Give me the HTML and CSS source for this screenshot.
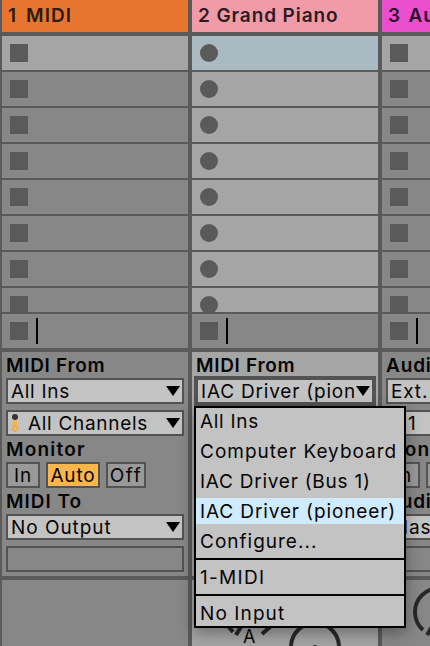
FILE: index.html
```
<!DOCTYPE html>
<html lang="en">
<head>
<meta charset="utf-8">
<title>Session View</title>
<link rel="stylesheet" href="styles.css">
</head>
<body>
<main class="session">
  <section class="track">
    <h2 class="title orange"><span class="t-midi">1 MIDI</span></h2>
    <div class="clips">
      <div class="slot lit"><i class="stop"></i></div><div class="slot"><i class="stop"></i></div><div class="slot"><i class="stop"></i></div><div class="slot"><i class="stop"></i></div><div class="slot"><i class="stop"></i></div><div class="slot"><i class="stop"></i></div><div class="slot"><i class="stop"></i></div><div class="slot"><i class="stop"></i></div>
    </div>
    <div class="status"><i class="stop"></i><i class="caret"></i></div>
    <div class="io">
      <h3 class="t-from">MIDI From</h3>
      <div class="select"><span class="t-allins">All Ins</span><i class="arrow"></i></div>
      <div class="select second"><svg class="channel" width="8" height="20"><circle cx="4" cy="4" r="3" fill="#333"/><circle cx="4" cy="10" r="3" fill="#f9b64d"/><circle cx="4" cy="15.500" r="2.700" fill="#f9b64d" stroke="#c88e38" stroke-width=".7" stroke-dasharray="2 1"/></svg><span class="t-channels">All Channels</span><i class="arrow"></i></div>
      <h3 class="t-monitor">Monitor</h3>
      <div class="buttons"><b class="in"><span>In</span></b><b class="auto"><span>Auto</span></b><b class="off"><span>Off</span></b></div>
      <h3 class="t-to">MIDI To</h3>
      <div class="select"><span class="t-output">No Output</span><i class="arrow"></i></div>
      <div class="blank"></div>
    </div>
    <div class="mixer"></div>
  </section>

  <section class="track selected">
    <h2 class="title pink"><span class="t-piano">2 Grand Piano</span></h2>
    <div class="clips">
      <div class="slot blue"><i class="record"></i></div><div class="slot"><i class="record"></i></div><div class="slot"><i class="record"></i></div><div class="slot"><i class="record"></i></div><div class="slot"><i class="record"></i></div><div class="slot"><i class="record"></i></div><div class="slot"><i class="record"></i></div><div class="slot"><i class="record"></i></div>
    </div>
    <div class="status"><i class="stop"></i><i class="caret"></i></div>
    <div class="io">
      <h3 class="t-from">MIDI From</h3>
      <div class="select focused"><span class="t-pion">IAC Driver (pion</span><i class="arrow"></i></div>
      <div class="menu">
        <div><span class="t-allins">All Ins</span></div>
        <div><span class="t-keyboard">Computer Keyboard</span></div>
        <div><span class="t-bus">IAC Driver (Bus 1)</span></div>
        <div class="active"><span class="t-pioneer">IAC Driver (pioneer)</span></div>
        <div><span class="t-config">Configure...</span></div>
        <hr>
        <div><span class="t-one">1-MIDI</span></div>
        <hr>
        <div><span class="t-input">No Input</span></div>
      </div>
    </div>
    <div class="mixer"><svg width="186" height="66"><g fill="none" stroke="#282828" stroke-width="4"><path d="M36 46l5 6M44 55l6-10M70 54l8-7"/><circle cx="123" cy="67" r="24"/><path d="M123 65v10" stroke-width="3"/></g></svg><span class="send">A</span></div>
  </section>

  <section class="track third">
    <h2 class="title magenta"><span class="t-audio">3 Au</span></h2>
    <div class="clips">
      <div class="slot lit"><i class="stop"></i></div><div class="slot"><i class="stop"></i></div><div class="slot"><i class="stop"></i></div><div class="slot"><i class="stop"></i></div><div class="slot"><i class="stop"></i></div><div class="slot"><i class="stop"></i></div><div class="slot"><i class="stop"></i></div><div class="slot"><i class="stop"></i></div>
    </div>
    <div class="status"><i class="stop"></i><i class="caret"></i></div>
    <div class="io">
      <h3 class="t-audiofrom">Audi</h3>
      <div class="select"><span class="t-ext">Ext.</span></div>
      <div class="select second"><span class="t-channel1">1</span></div>
      <h3 class="t-monitor">Mon</h3>
      <div class="buttons"><b class="in"><span>In</span></b><b class="auto plain"></b></div>
      <h3 class="t-audiofrom">Audi</h3>
      <div class="select"><span class="t-master">Mas</span></div>
      <div class="blank"></div>
    </div>
    <div class="mixer"><svg width="186" height="66"><g fill="none" stroke="#282828" stroke-width="4"><path d="M41 50A24 24 0 1 1 73 50M45 55l12-20"/></g></svg></div>
  </section>
</main>
</body>
</html>
```

FILE: styles.css
```
* { box-sizing: border-box; }
body { margin: 0; width: 430px; height: 646px; overflow: hidden; background: #5a5a5a; color: #050505; font: 19px/26px Inter, "Liberation Sans", sans-serif; letter-spacing: .85px; }
.session { display: flex; gap: 4px; padding-left: 2px; width: 430px; height: 646px; overflow: hidden; }
.track { width: 186px; flex: none; display: flex; flex-direction: column; }
.title, h3 { margin: 0; font-size: 19px; font-weight: 600; white-space: nowrap; }
.title { height: 32px; line-height: 31px; padding-left: 6px; margin-bottom: 4px; color: #2b1b10; overflow: hidden; }
.orange { background: #e7752f; }
.pink { background: #f29aa7; color: #2d1b24; }
.magenta { background: #eb4fcf; color: #2b102b; }
span { display: inline-block; white-space: nowrap; }
.clips { height: 276px; overflow: hidden; display: flex; flex-direction: column; gap: 2px; }
.slot { height: 34px; flex: none; padding: 8px; background: #878787; }
.selected .slot { background: #a5a5a5; }
.slot.lit { background: #a5a5a5; }
.selected .slot.blue { background: #a9bac2; }
.stop, .record { display: block; width: 18px; height: 18px; background: #5a5a5a; }
.record { border-radius: 50%; }
.status { height: 34px; margin: 2px 0 4px; padding: 8px; display: flex; background: #878787; }
.caret { width: 2px; height: 26px; margin: -4px 0 0 8px; background: #000; }
.io { height: 224px; padding: 0 4px; background: #878787; position: relative; }
.selected .io { background: #a5a5a5; }
h3 { height: 26px; line-height: 28px; }
.select { height: 26px; width: 178px; border: 2px solid #535353; background: #c3c3c3; padding: 0 2px 0 3px; line-height: 23px; display: flex; justify-content: space-between; align-items: center; overflow: hidden; }
.select.second { margin-top: 6px; justify-content: flex-start; }
.second .arrow { margin-left: auto; }
.channel { margin-right: 9px; flex: none; }
.arrow { width: 14px; height: 10px; flex: none; background: #000; clip-path: polygon(0 0, 100% 0, 50% 100%); }
.buttons { display: flex; gap: 6px; }
.buttons b { height: 26px; border: 2px solid #535353; font-weight: 400; line-height: 23px; display: flex; justify-content: center; background: #999; }
.buttons .in { width: 34px; }
.buttons .auto { width: 54px; background: #f9b64d; }
.buttons .off { width: 40px; letter-spacing: 1.6px; }
.buttons .plain { background: #999; }
.blank { height: 26px; margin-top: 6px; border: 2px solid #535353; }
.select.focused { width: 182px; height: 30px; border-width: 4px; margin: -2px 0 0 -2px; padding: 0 2px 0 3px; }
.menu { position: absolute; z-index: 2; left: 2px; top: 54px; width: 212px; height: 222px; border: 2px solid #000; background: #c3c3c3; box-shadow: 0 5px 14px rgba(0,0,0,.35); display: flex; flex-direction: column; gap: 4px; line-height: 28px; }
.menu div { height: 26px; flex: none; padding-left: 4px; }
.menu .active { background: #cfebff; }
.menu hr { width: 100%; border: 0; height: 2px; margin: 0; background: #000; flex: none; }
.mixer { height: 66px; margin-top: 4px; background: #878787; position: relative; overflow: hidden; }
.selected .mixer { background: #a5a5a5; }
.mixer svg { display: block; }
.send { position: absolute; left: 51px; top: 44px; font-size: 18px; }
.t-midi { letter-spacing: 1.1px; word-spacing: 3px; }
.t-piano { letter-spacing: .9px; }
.t-from, .t-allins { letter-spacing: .7px; }
.t-channels { letter-spacing: .7px; }
.t-monitor { letter-spacing: 1.2px; }
.t-to { letter-spacing: 1px; }
.t-output { letter-spacing: .95px; }
.t-pion { letter-spacing: .8px; }
.t-keyboard { letter-spacing: 1px; }
.t-bus { letter-spacing: .75px; }
.t-pioneer { letter-spacing: .88px; }
.t-config { letter-spacing: 1px; }
.t-one { letter-spacing: 1.3px; }
.t-input { letter-spacing: 1.1px; }
.t-audio { word-spacing: 2px; }
.t-channel1 { margin-left: 17px; }
```
